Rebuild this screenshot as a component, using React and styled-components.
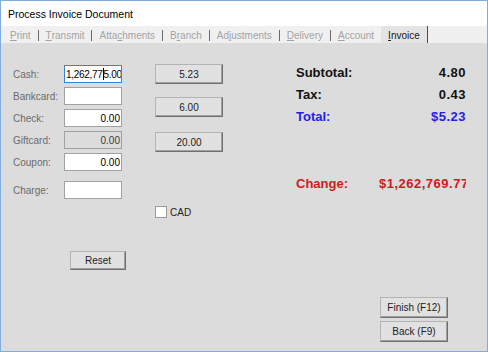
import { Fragment } from 'react';
import styled, { createGlobalStyle } from 'styled-components';

const GlobalStyle = createGlobalStyle`
    html, body {
        margin: 0;
        padding: 0;
        background: #ffffff;
    }
    * {
        box-sizing: border-box;
    }
`
const Window = styled.div`
    width: 488px;
    height: 352px;
    border: 1px solid #7eaedf;
    display: flex;
    flex-direction: column;
    font-family: "Liberation Sans", Arial, sans-serif;
    font-size: 10px;
    overflow: hidden;
`
const TitleBar = styled.div`
    height: 25px;
    background: #ffffff;
    display: flex;
    align-items: center;
    padding-left: 7px;
    font-size: 10.5px;
    color: #000000;
`
const TabStrip = styled.div`
    height: 17px;
    background: #f0f0f0;
    display: flex;
    align-items: stretch;
    padding-left: 2px;
`
const Tab = styled.div`
    display: flex;
    align-items: center;
    padding: 2px 7px 0 7px;
    color: ${p => p.$active ? '#1a1a1a' : '#a3a3a3'};
    background: ${p => p.$active ? '#e4e4e4' : 'transparent'};
    border-right: ${p => p.$active ? '1px solid #4a4a4a' : 'none'};
    white-space: nowrap;
    u {
        text-decoration-thickness: 1px;
        text-underline-offset: 1px;
    }
`
const Sep = styled.span`
    width: 1px;
    height: 11px;
    align-self: center;
    margin-top: 1px;
    background: #6a6a6a;
`
const Body = styled.div`
    flex: 1;
    background: #dcdcdc;
    display: flex;
    padding: 0 21px 9px 12px;
`
const LeftCol = styled.div`
    width: 110px;
    padding-top: 22px;
    display: flex;
    flex-direction: column;
    gap: 4px;
`
const FieldRow = styled.div`
    display: flex;
    align-items: center;
    height: 18px;
    margin-top: ${p => p.$spaced ? '6px' : '0'};
`
const Label = styled.span`
    width: 51px;
    color: #6b6b6b;
`
const Field = styled.div`
    width: 58px;
    height: 18px;
    display: flex;
    align-items: center;
    justify-content: ${p => p.$left ? 'flex-start' : 'flex-end'};
    padding: 0 1px;
    background: ${p => p.$disabled ? '#dcdcdc' : '#ffffff'};
    border: 1px solid ${p => p.$focused ? '#2f86d6' : '#a2a2a2'};
    color: ${p => p.$disabled ? '#3a3a3a' : '#000000'};
    letter-spacing: ${p => p.$focused ? '-0.3px' : '0'};
    white-space: nowrap;
    overflow: hidden;
`
const Caret = styled.span`
    display: inline-block;
    flex: none;
    width: 1px;
    height: 12px;
    background: #000000;
`
const Button = styled.button`
    width: ${p => p.$w || 68}px;
    height: ${p => p.$h || 20}px;
    margin-top: ${p => p.$mt || 0}px;
    padding: 0;
    font-family: "Liberation Sans", Arial, sans-serif;
    font-size: 10px;
    color: #222222;
    background: #e1e1e1;
    border: 1px solid;
    border-color: #b4b4b4 #6f6f6f #6f6f6f #b4b4b4;
    box-shadow: inset -1px -1px 0 #a0a0a0;
`
const ResetButton = styled(Button)`
    margin-left: 57px;
    align-self: flex-start;
`
const MidCol = styled.div`
    width: 68px;
    margin-left: 32px;
    padding-top: 21px;
    display: flex;
    flex-direction: column;
`
const CheckRow = styled.label`
    display: flex;
    align-items: center;
    gap: 3px;
    margin-top: 54px;
    color: #222222;
`
const Box = styled.span`
    width: 12px;
    height: 12px;
    background: #ffffff;
    border: 1px solid #9a9a9a;
`
const RightCol = styled.div`
    width: 170px;
    margin-left: 73px;
    padding-top: 18px;
    display: flex;
    flex-direction: column;
`
const SumRow = styled.div`
    display: grid;
    grid-template-columns: 83px 87px;
    align-items: center;
    height: 22px;
    margin-top: ${p => p.$mt || 0}px;
    font-size: 13px;
    font-weight: bold;
    color: ${p => p.$color || '#111111'};
`
const SumValue = styled.span`
    text-align: ${p => p.$left ? 'left' : 'right'};
    letter-spacing: 0.5px;
    white-space: nowrap;
    overflow: hidden;
`
const Actions = styled.div`
    margin-top: auto;
    margin-right: 18px;
    align-self: flex-end;
    display: flex;
    flex-direction: column;
    gap: 3px;
`

const tabs = [
    ['', 'P', 'rint'],
    ['', 'T', 'ransmit'],
    ['Atta', 'c', 'hments'],
    ['B', 'r', 'anch'],
    ['Ad', 'j', 'ustments'],
    ['', 'D', 'elivery'],
    ['', 'A', 'ccount'],
];

const App = () => {
    return (
        <>
            <GlobalStyle />
            <Window>
                <TitleBar>Process Invoice Document</TitleBar>
                <TabStrip>
                    {tabs.map(([a, u, b], i) => (
                        <Fragment key={i}>
                            <Tab>{a}<u>{u}</u>{b}</Tab>
                            {i < tabs.length - 1 && <Sep />}
                        </Fragment>
                    ))}
                    <Tab $active><u>I</u>nvoice</Tab>
                </TabStrip>
                <Body>
                    <LeftCol>
                        <FieldRow>
                            <Label>Cash:</Label>
                            <Field $focused $left>1,262,77<Caret />5.00</Field>
                        </FieldRow>
                        <FieldRow>
                            <Label>Bankcard:</Label>
                            <Field />
                        </FieldRow>
                        <FieldRow>
                            <Label>Check:</Label>
                            <Field>0.00</Field>
                        </FieldRow>
                        <FieldRow>
                            <Label>Giftcard:</Label>
                            <Field $disabled>0.00</Field>
                        </FieldRow>
                        <FieldRow>
                            <Label>Coupon:</Label>
                            <Field>0.00</Field>
                        </FieldRow>
                        <FieldRow $spaced>
                            <Label>Charge:</Label>
                            <Field />
                        </FieldRow>
                        <ResetButton $w={56} $h={19} $mt={48}>Reset</ResetButton>
                    </LeftCol>
                    <MidCol>
                        <Button>5.23</Button>
                        <Button $mt={13}>6.00</Button>
                        <Button $mt={15}>20.00</Button>
                        <CheckRow>
                            <Box />
                            CAD
                        </CheckRow>
                    </MidCol>
                    <RightCol>
                        <SumRow>
                            <span>Subtotal:</span>
                            <SumValue>4.80</SumValue>
                        </SumRow>
                        <SumRow>
                            <span>Tax:</span>
                            <SumValue>0.43</SumValue>
                        </SumRow>
                        <SumRow $color="#1f1fe8">
                            <span>Total:</span>
                            <SumValue>$5.23</SumValue>
                        </SumRow>
                        <SumRow $color="#d11a1a" $mt={45}>
                            <span>Change:</span>
                            <SumValue $left>$1,262,769.77</SumValue>
                        </SumRow>
                        <Actions>
                            <Button $h={21}>Finish (F12)</Button>
                            <Button $h={21}>Back (F9)</Button>
                        </Actions>
                    </RightCol>
                </Body>
            </Window>
        </>
    )
}

export default App;
